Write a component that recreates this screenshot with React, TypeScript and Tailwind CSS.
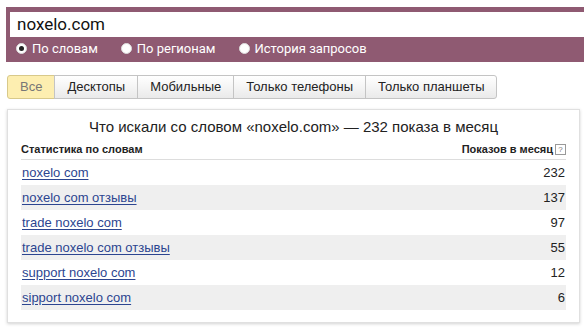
const rows = [
  { phrase: 'noxelo com', count: 232 },
  { phrase: 'noxelo com отзывы', count: 137 },
  { phrase: 'trade noxelo com', count: 97 },
  { phrase: 'trade noxelo com отзывы', count: 55 },
  { phrase: 'support noxelo com', count: 12 },
  { phrase: 'sipport noxelo com', count: 6 },
]

const tabs = ['Все', 'Десктопы', 'Мобильные', 'Только телефоны', 'Только планшеты']

function Radio({ label, checked }: { label: string; checked?: boolean }) {
  return (
    <label className="flex items-center gap-[5px]">
      <span className="w-[11px] h-[11px] rounded-full bg-white flex items-center justify-center border border-[#ddd]">
        {checked && <span className="w-[5px] h-[5px] rounded-full bg-[#222]" />}
      </span>
      <span>{label}</span>
    </label>
  )
}

export default function App() {
  return (
    <div className="w-[584px] h-[328px] bg-white overflow-hidden font-['Liberation_Sans',Arial,sans-serif] text-[#222]">
      {/* Search frame */}
      <div className="ml-[6px] mt-[7px] bg-[#8f5a72] pt-[5px] pl-[4px] pb-[2px]">
        <div className="h-[25px] bg-white pl-[7px] text-[17px] leading-[25px] text-[#111] font-['Roboto',Arial,sans-serif]">
          noxelo.com
        </div>
        <div className="h-[23px] flex items-center pl-[6px] gap-[23px] text-[13px] text-white font-['Roboto',Arial,sans-serif]">
          <Radio label="По словам" checked />
          <Radio label="По регионам" />
          <Radio label="История запросов" />
        </div>
      </div>

      {/* Tabs */}
      <div className="mt-[13px] ml-[7px] flex h-[24px]">
        {tabs.map((t, i) => (
          <div
            key={t}
            className={`px-[12px] flex items-center text-[13px] border border-[#c4c4c4] ${i > 0 ? '-ml-px' : ''} ${
              i === 0
                ? 'bg-[#fdeeb0] text-[#777] rounded-l-[3px] border-[#d8c98a]'
                : 'bg-gradient-to-b from-white to-[#eaeaea] text-[#222]'
            } ${i === tabs.length - 1 ? 'rounded-r-[3px]' : ''}`}
          >
            {t}
          </div>
        ))}
      </div>

      {/* Stats panel */}
      <div className="mt-[10px] ml-[7px] w-[573px] border border-[#e0e0e0] shadow-[0_1px_3px_rgba(0,0,0,0.18)] px-[13px] pt-[7px] pb-[12px]">
        <div className="text-center text-[15px] leading-[20px] text-[#222]">
          Что искали со словом «noxelo.com» — 232 показа в месяц
        </div>
        <div className="mt-[2px] h-[21px] flex items-center justify-between border-b border-[#ddd] text-[11px] font-bold text-[#222]">
          <span>Статистика по словам</span>
          <span className="flex items-center gap-[2px]">
            Показов в месяц
            <span className="w-[11px] h-[11px] border border-[#999] text-[8px] leading-[9px] text-center text-[#777] font-normal">?</span>
          </span>
        </div>
        {rows.map((r, i) => (
          <div
            key={r.phrase}
            className={`h-[25px] flex items-center justify-between pl-[1px] pr-[1px] text-[13px] ${i % 2 === 1 ? 'bg-[#efefef]' : ''}`}
          >
            <a className="text-[#2c4590] underline underline-offset-2">{r.phrase}</a>
            <span className="text-[#222]">{r.count}</span>
          </div>
        ))}
      </div>
    </div>
  )
}
